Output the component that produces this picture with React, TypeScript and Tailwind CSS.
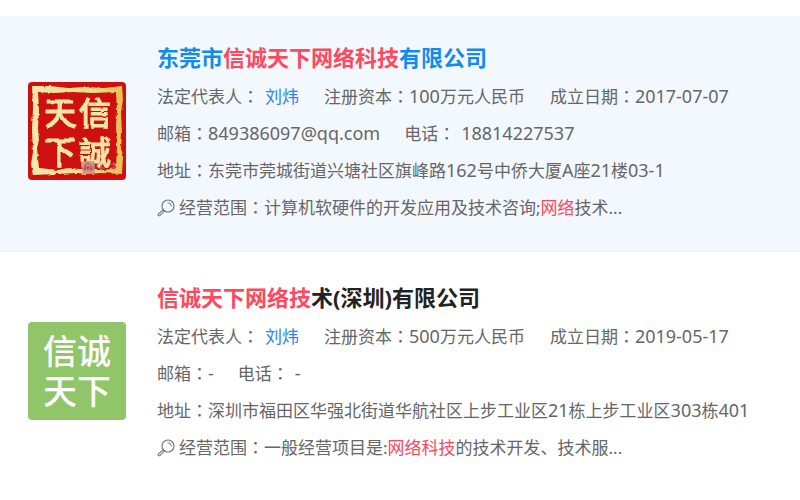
import type { ReactNode } from "react";

interface Part {
    text: string;
    hit?: boolean;
}

interface Company {
    id: number;
    active: boolean;
    logo: ReactNode;
    name: Part[];
    legalPerson: string;
    capital: string;
    founded: string;
    email: string;
    phone: string;
    address: string;
    scope: Part[];
}

function SealLogo() {
    return (
        <svg viewBox="0 0 98 98" className="block h-full w-full" role="img" aria-label="信诚天下">
            <defs>
                <linearGradient id="gold" x1="0" y1="0" x2="1" y2="0">
                    <stop offset="0" stopColor="#f3e9a8" />
                    <stop offset="0.65" stopColor="#f0dc8c" />
                    <stop offset="1" stopColor="#e8c050" />
                </linearGradient>
                <filter id="rough" x="-5%" y="-5%" width="110%" height="110%">
                    <feTurbulence type="fractalNoise" baseFrequency="0.2" numOctaves="2" seed="4" result="noise" />
                    <feDisplacementMap in="SourceGraphic" in2="noise" scale="3" xChannelSelector="R" yChannelSelector="G" />
                </filter>
                <filter id="worn" x="-5%" y="-5%" width="110%" height="110%">
                    <feTurbulence type="fractalNoise" baseFrequency="0.1" numOctaves="1" seed="9" result="noise" />
                    <feDisplacementMap in="SourceGraphic" in2="noise" scale="3" xChannelSelector="R" yChannelSelector="G" />
                </filter>
            </defs>
            <rect width="98" height="98" fill="#cf1010" />
            <path
                filter="url(#rough)"
                fill="url(#gold)"
                fillRule="evenodd"
                d="M4 4L22 4L40 6L58 5L76 6L94 4L95 18L93 30L94 52L93 66L95 74L94 92L72 91L58 92L50 91L28 92L5 93L3 82L5 70L4 48L5 26Z M10 10L11 30L10 46L11 58L9 66L11 86L30 88L40 86L52 87L70 88L88 87L89 64L88 44L89 28L88 10L66 11L44 10L26 11Z"
            />
            <g
                filter="url(#worn)"
                fill="#f1e7a4"
                stroke="#f1e7a4"
                strokeWidth="1"
                strokeLinejoin="round"
                fontSize="32"
                fontWeight="500"
                textAnchor="middle"
                className="font-['Noto_Sans_CJK_TC','Noto_Sans_CJK_SC',sans-serif]"
            >
                <text x="32" y="43">天</text>
                <text x="67" y="43">信</text>
                <text x="32" y="82">下</text>
                <text x="67" y="82">誠</text>
            </g>
            <g opacity="0.8">
                <rect x="54" y="79" width="13" height="13" rx="3" fill="#c98d8a" />
                <path d="M57 89V83L60 81L63 83V89M60 84V89" fill="none" stroke="#a83a38" strokeWidth="1.2" />
                <path d="M69 82H78M70 86H77M73 80V90M81 82H90M82 86H90M86 80V90" stroke="#d8a09a" strokeWidth="1" opacity="0.7" />
            </g>
        </svg>
    );
}

function GreenLogo() {
    return (
        <div className="flex h-full w-full flex-col items-center justify-center bg-[#90c56a] text-[34px] leading-10 font-medium text-white">
            <span>信诚</span>
            <span>天下</span>
        </div>
    );
}

function SearchIcon() {
    return (
        <svg viewBox="0 0 18 18" className="h-[18px] w-[18px] shrink-0" fill="none" stroke="#777" strokeLinecap="round" strokeLinejoin="round" aria-hidden="true">
            <circle cx="11" cy="7" r="6" strokeWidth="1.2" />
            <path d="M11 3.6A3.5 3.5 0 0 1 14.4 7" strokeWidth="1" />
            <path d="M6.2 10.6L1.2 15.2Q0.8 16 1.4 16.6Q2 17 2.8 16.6L7.4 11.8" strokeWidth="1.1" />
        </svg>
    );
}

// latin runs are set a step larger so that digits keep up with the hanzi
function Mixed({ children }: { children: string }) {
    return (
        <>
            {children.split(/([\x21-\x7e]+)/).map((run, i) =>
                i % 2 ? <span key={i} className="text-lg leading-none">{run}</span> : run
            )}
        </>
    );
}

// the colon sits in the middle of its cell only in the traditional forms
function Label({ children }: { children: string }) {
    return (
        <>
            {children}
            <span lang="zh-TW" className="font-['Noto_Sans','Noto_Sans_CJK_TC',sans-serif]">：</span>
        </>
    );
}

function CompanyCard({ company }: { company: Company }) {
    return (
        <article className={`flex items-start gap-[31px] border-b px-7 pt-5 pb-[25px] ${company.active ? "border-[#eef0f2] bg-[#f3f8fe]" : "border-transparent bg-white"}`}>
            <div className="mt-[46px] h-[98px] w-[98px] shrink-0 overflow-hidden rounded">{company.logo}</div>
            <div className="min-w-0 flex-1 text-[17px] leading-[37px] whitespace-nowrap text-[#666]">
                <h2 className="text-[22px] leading-[42px] font-bold">
                    <a href="#" className={company.active ? "text-[#128bed]" : "text-[#222]"}>
                        {company.name.map((part) => (
                            <span key={part.text} className={part.hit ? "text-[#fd485e]" : ""}>{part.text}</span>
                        ))}
                    </a>
                </h2>
                <div className="flex gap-[25px]">
                    <span className="flex gap-1.5">
                        <span><Label>法定代表人</Label></span>
                        <a href="#" className="text-[#2b85f0]">{company.legalPerson}</a>
                    </span>
                    <span><Label>注册资本</Label><Mixed>{company.capital}</Mixed></span>
                    <span><Label>成立日期</Label><Mixed>{company.founded}</Mixed></span>
                </div>
                <div className="flex gap-6">
                    <span><Label>邮箱</Label><Mixed>{company.email}</Mixed></span>
                    <span className="flex gap-1.5">
                        <span><Label>电话</Label></span>
                        <span><Mixed>{company.phone}</Mixed></span>
                    </span>
                </div>
                <div><Label>地址</Label><Mixed>{company.address}</Mixed></div>
                <div className="flex items-center gap-1">
                    <SearchIcon />
                    <span>
                        <Label>经营范围</Label>
                        {company.scope.map((part) => (
                            <span key={part.text} className={part.hit ? "text-[#fd485e]" : ""}>{part.text}</span>
                        ))}
                    </span>
                </div>
            </div>
        </article>
    );
}

const companies: Company[] = [
    {
        id: 1,
        active: true,
        logo: <SealLogo />,
        name: [{ text: "东莞市" }, { text: "信诚天下网络科技", hit: true }, { text: "有限公司" }],
        legalPerson: "刘炜",
        capital: "100万元人民币",
        founded: "2017-07-07",
        email: "849386097@qq.com",
        phone: "18814227537",
        address: "东莞市莞城街道兴塘社区旗峰路162号中侨大厦A座21楼03-1",
        scope: [{ text: "计算机软硬件的开发应用及技术咨询;" }, { text: "网络", hit: true }, { text: "技术..." }]
    },
    {
        id: 2,
        active: false,
        logo: <GreenLogo />,
        name: [{ text: "信诚天下网络技", hit: true }, { text: "术(深圳)有限公司" }],
        legalPerson: "刘炜",
        capital: "500万元人民币",
        founded: "2019-05-17",
        email: "-",
        phone: "-",
        address: "深圳市福田区华强北街道华航社区上步工业区21栋上步工业区303栋401",
        scope: [{ text: "一般经营项目是:" }, { text: "网络科技", hit: true }, { text: "的技术开发、技术服..." }]
    }
];

export default function App() {
    return (
        <main lang="zh-CN" className="flex flex-col gap-1 bg-white pt-4 font-['Noto_Sans','Noto_Sans_CJK_SC',sans-serif]">
            {companies.map((company) => (
                <CompanyCard key={company.id} company={company} />
            ))}
        </main>
    );
}
